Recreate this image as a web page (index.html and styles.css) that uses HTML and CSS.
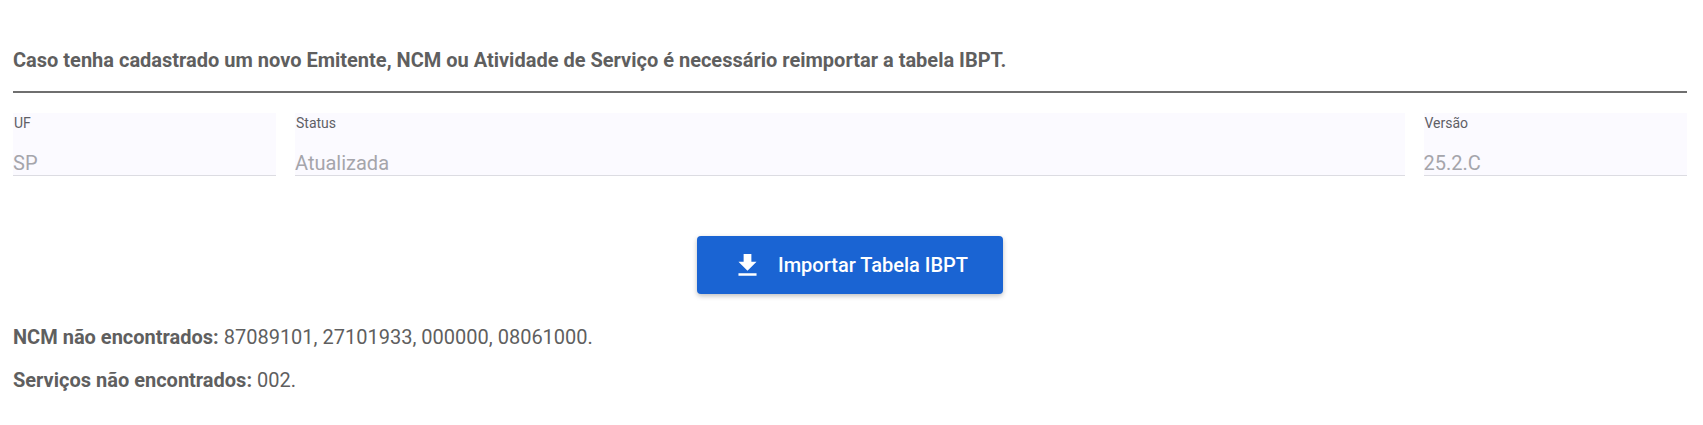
FILE: index.html
```html
<!DOCTYPE html>
<html lang="pt-BR">
<head>
<meta charset="utf-8">
<title>Tabela IBPT</title>
<link rel="stylesheet" href="styles.css">
</head>
<body>
<main class="page">
  <h2 class="notice">Caso tenha cadastrado um novo Emitente, NCM ou Atividade de Serviço é necessário reimportar a tabela IBPT.</h2>
  <hr class="rule">
  <div class="fields">
    <div class="field field-uf"><span class="label">UF</span><span class="value">SP</span></div>
    <div class="field field-status"><span class="label">Status</span><span class="value">Atualizada</span></div>
    <div class="field field-versao"><span class="label">Versão</span><span class="value">25.2.C</span></div>
  </div>
  <div class="actions">
    <button class="btn" type="button">
      <svg class="btn-icon" viewBox="0 0 24 24" aria-hidden="true"><path d="M19 9h-4V3H9v6H5l7 7 7-7zM5 18v2h14v-2H5z"/></svg>
      <span>Importar Tabela IBPT</span>
    </button>
  </div>
  <p class="info"><strong>NCM não encontrados:</strong> 87089101, 27101933, 000000, 08061000.</p>
  <p class="info"><strong>Serviços não encontrados:</strong> 002.</p>
</main>
</body>
</html>
```
FILE: styles.css
```css
* { box-sizing: border-box; }
html, body { margin: 0; background: #fff; }
body { font-family: Roboto, "Liberation Sans", sans-serif; color: #5f5f5f; }
.page { padding: 47px 16px 0 13px; height: 425px; overflow: hidden; }
.notice { margin: 0; font-size: 20px; line-height: 26px; font-weight: 700; color: #5f5f5f; }
.rule { margin: 18px 0 0; border: 0; border-top: 2px solid #6f6f6f; height: 0; }
.fields { display: flex; margin-top: 20px; }
.field { height: 63px; background: #fbfaff; border-bottom: 1px solid #dcdce2; display: flex; flex-direction: column; }
.field-uf { width: 262.5px; margin-right: 19.5px; }
.field-versao { width: 263.5px; margin-left: 18.5px; }
.field-status { flex: 1; }
.label { font-size: 14px; line-height: 16px; color: #5f5f66; margin-top: 2px; padding-left: 1px; }
.value { font-size: 20px; line-height: 26px; color: #a5a5ab; margin-top: 19px; }
.actions { display: flex; justify-content: center; margin-top: 60px; }
.btn { width: 306px; height: 58px; border: 0; border-radius: 4px; background: #1a64d3; color: #fff; font-family: inherit; font-size: 20px; font-weight: 500; display: flex; align-items: center; justify-content: center; gap: 15px; box-shadow: 0 2px 5px rgba(0,0,0,.25); padding: 0; }
.btn-icon { width: 31px; height: 31px; fill: #fff; flex: none; }
.info { margin: 0; font-size: 20px; line-height: 28px; color: #5f5f5f; }
.actions + .info { margin-top: 29px; }
.info + .info { margin-top: 15px; }
.info strong { font-weight: 700; }
```
